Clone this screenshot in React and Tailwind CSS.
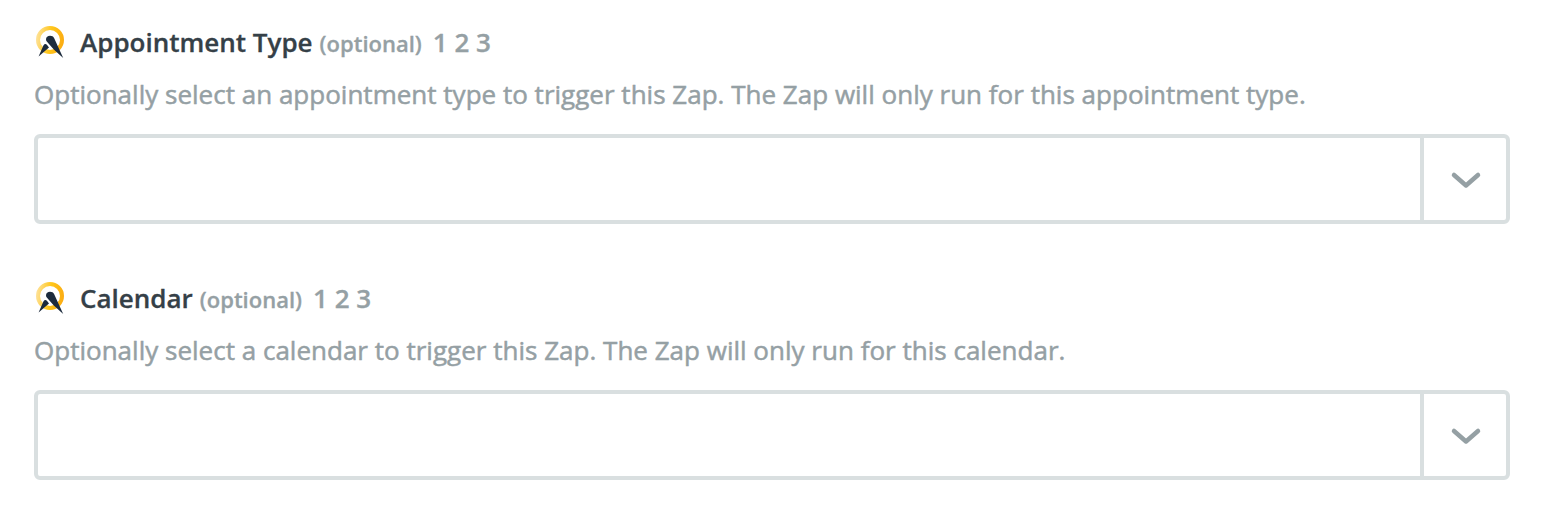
import React from 'react';

const fields = [
  {
    id: 'appointment-type',
    label: 'Appointment Type',
    help: 'Optionally select an appointment type to trigger this Zap. The Zap will only run for this appointment type.',
  },
  {
    id: 'calendar',
    label: 'Calendar',
    help: 'Optionally select a calendar to trigger this Zap. The Zap will only run for this calendar.',
  },
];

const AppIcon = ({ id }) => (
  <svg className="w-8 h-8 shrink-0" viewBox="0 0 32 32" fill="none">
    <defs>
      <linearGradient id={`${id}-ring`} x1="2" y1="12" x2="30" y2="16" gradientUnits="userSpaceOnUse">
        <stop offset="0" stopColor="#fee29a" />
        <stop offset="0.5" stopColor="#ffc61a" />
        <stop offset="1" stopColor="#fbab12" />
      </linearGradient>
    </defs>
    <circle cx="16" cy="14" r="12" stroke={`url(#${id}-ring)`} strokeWidth="4" />
    <path d="M12 13.2C12 11 13.8 9.8 16 9.8C18 9.8 19.3 10.6 20.2 12.2L29.2 32L19.8 23.6L13 15.8C12.3 15 12 14.2 12 13.2z" fill="#1c2b3d" />
    <path d="M4.6 30.4L9.4 19.6C10.2 17.7 11.8 17.5 12.9 18.8L15 21.4z" fill="#1c2b3d" />
  </svg>
);

const SelectField = ({ id, label, help }) => (
  <div>
    <label htmlFor={id} className="flex items-baseline h-8 leading-8 font-semibold text-[#95a0a4] [-webkit-text-stroke:0.3px]">
      <span className="self-center">
        <AppIcon id={id} />
      </span>
      <span className="ml-[14px] text-[26px] text-[#354047]">{label}</span>
      <span className="ml-[7px] text-[22px]">(optional)</span>
      <span className="ml-[11px] text-[26px]">1 2 3</span>
    </label>
    <p className="mt-[18px] text-[26px] leading-[36px] tracking-[0.01px] whitespace-nowrap text-[#95a0a4] [-webkit-text-stroke:0.5px]">{help}</p>
    <div className="mt-[22px] flex h-[90px] border-4 border-[#d9dfe0] rounded-md">
      <input id={id} type="text" className="flex-1 min-w-0 px-4 outline-none" />
      <button type="button" className="flex w-[86px] items-center justify-center border-l-4 border-[#d9dfe0]">
        <svg className="w-8 h-5 translate-x-px translate-y-px" viewBox="0 0 32 20" fill="none">
          <path d="M4 5l12 10.5L28 5" stroke="#95a0a4" strokeWidth="4.5" strokeLinecap="round" strokeLinejoin="round" />
        </svg>
      </button>
    </div>
  </div>
);

const App = () => (
  <div className="h-[516px] bg-white pt-[26px] pl-[34px] pr-[36px] space-y-[58px] font-['Open_Sans',sans-serif]">
    {fields.map((field) => (
      <SelectField key={field.id} {...field} />
    ))}
  </div>
);

export default App;
